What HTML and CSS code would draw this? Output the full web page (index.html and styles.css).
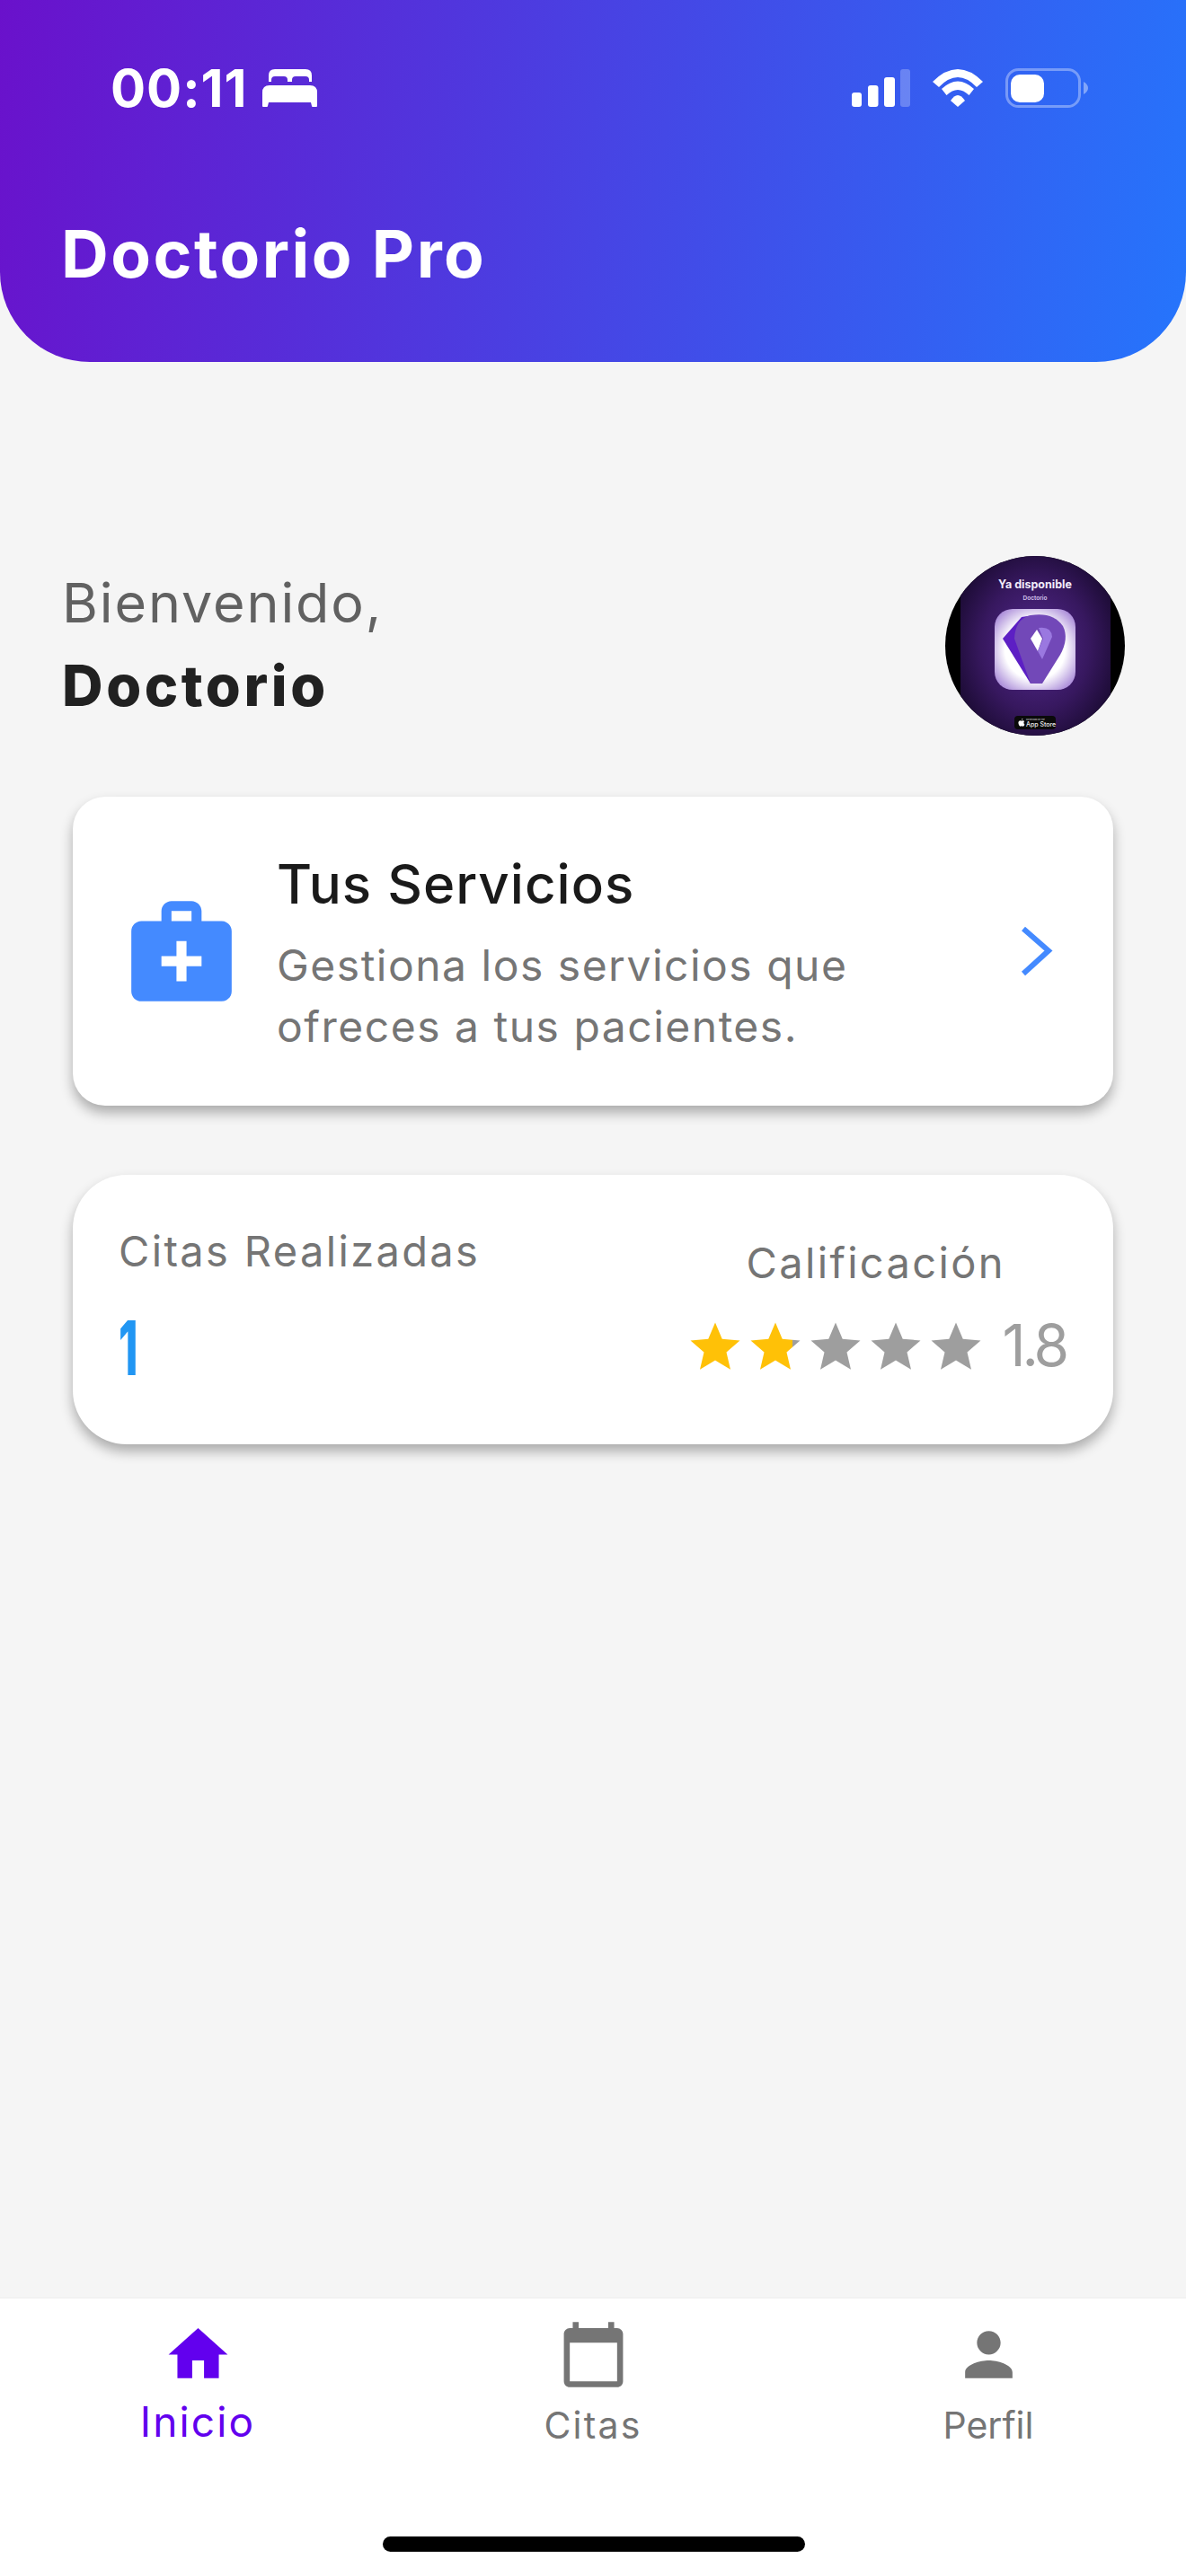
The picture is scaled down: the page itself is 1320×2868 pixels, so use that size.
FILE: index.html
```html
<!DOCTYPE html>
<html lang="es">
<head>
<meta charset="utf-8">
<title>Doctorio Pro</title>
<link rel="stylesheet" href="styles.css">
</head>
<body>
<div class="app">
  <header class="header">
    <div class="status">
      <div class="status-left">
        <span class="time">00:11</span>
        <svg class="bed" viewBox="0 0 61 42" width="61" height="42"><path fill="#fff" fill-rule="evenodd" d="M14 0H48Q55 0 55 7V14H52V12Q52 8 48 8H37Q33 8 33 12V14H28V12Q28 8 24 8H14Q10 8 10 12V14H7V7Q7 0 14 0ZM8 18H53Q61 18 61 26V41Q61 42 60 42H56Q55 42 55 41L54 37H7L6 41Q6 42 5 42H1Q0 42 0 41V26Q0 18 8 18Z"/></svg>
      </div>
      <div class="status-right">
        <svg viewBox="0 0 65 42" width="65" height="42"><rect x="0" y="26" width="11" height="16" rx="3" fill="#fff"/><rect x="18" y="18" width="11.5" height="24" rx="3" fill="#fff"/><rect x="36" y="9" width="12" height="33" rx="3" fill="#fff"/><rect x="54" y="0" width="11" height="42" rx="3" fill="#fff" fill-opacity=".25"/></svg>
        <svg viewBox="0 0 56 42" width="56" height="42"><path fill="#fff" d="M0 14Q28-14 56 14L49 20Q28-2 7 20Z"/><path fill="#fff" d="M10 22Q28 5 46 22L40.5 29Q28 17 15.5 29Z"/><path fill="#fff" d="M20 35Q28 23 36 35L28 42Z"/></svg>
        <svg class="battery" viewBox="0 0 92 44" width="92" height="44"><rect x="1.5" y="1.5" width="81" height="41" rx="13" fill="none" stroke="#fff" stroke-opacity=".35" stroke-width="3"/><rect x="6" y="7" width="37" height="31" rx="10" fill="#fff"/><path d="M87 15Q92 18 92 22Q92 26 87 29Z" fill="#fff" fill-opacity=".4"/></svg>
      </div>
    </div>
    <h1 class="brand">Doctorio Pro</h1>
  </header>

  <main class="main">
    <section class="greeting">
      <div class="greeting-text">
        <p class="hello">Bienvenido,</p>
        <p class="name">Doctorio</p>
      </div>
      <svg class="avatar" viewBox="0 0 200 200" width="200" height="200">
        <defs>
          <clipPath id="round"><circle cx="100" cy="100" r="100"/></clipPath>
          <radialGradient id="glow" cx="50%" cy="50%" r="60%"><stop offset="0" stop-color="#54298f"/><stop offset=".6" stop-color="#37185f"/><stop offset="1" stop-color="#190a30"/></radialGradient>
          <radialGradient id="tile" cx="50%" cy="50%" r="62%"><stop offset="0" stop-color="#fff"/><stop offset=".6" stop-color="#fff"/><stop offset="1" stop-color="#a98ad8"/></radialGradient>
        </defs>
        <g clip-path="url(#round)">
          <rect width="200" height="200" fill="#000"/>
          <rect x="17" width="167" height="200" fill="url(#glow)"/>
          <rect x="55" y="59" width="90" height="90" rx="20" fill="url(#tile)"/>
          <path fill="#5d1fc4" d="M64 92L85 68L98 66L99 142H95Z"/>
          <path fill="#7248b8" d="M95 66Q120 62 131 78Q138 92 128 110L108 142H95L77 92Q78 70 95 66Z"/>
          <path fill="#fff" d="M95 92L102 82L108 92L103 106Z"/>
          <path fill="#9a78e0" d="M104 80Q118 78 119 90L108 115L103 106L109 92Z"/>
          <text class="av-title" x="100" y="36" text-anchor="middle">Ya disponible</text>
          <text class="av-sub" x="100" y="49" text-anchor="middle">Doctorio</text>
          <rect x="77" y="178" width="46" height="15" rx="4" fill="#0a0a0a"/>
          <path fill="#fff" d="M85 182.5c1-.2 1.4-.9 1.4-1.5-.9.1-1.6.7-1.4 1.5zm2.4 3.2c0-1 .6-1.4.9-1.6-.6-.8-1.3-.9-1.7-.9-.7 0-1 .4-1.6.4-.6 0-1-.4-1.6-.4-1 0-2 1-2 2.6 0 1.8 1.3 3.9 2.3 3.9.6 0 .8-.4 1.4-.4.6 0 .8.4 1.4.4.9 0 1.7-1.6 1.9-2.3-.5-.2-1-.9-1-1.7z"/>
          <text class="av-small" x="90" y="183">Download on the</text>
          <text class="av-store" x="90" y="190">App Store</text>
        </g>
      </svg>
    </section>

    <section class="card services">
      <svg class="services-icon" viewBox="0 0 24 24" width="134" height="134"><path fill="#448aff" d="M20 6h-4V4c0-1.1-.9-2-2-2h-4c-1.1 0-2 .9-2 2v2H4c-1.1 0-2 .9-2 2v12c0 1.1.9 2 2 2h16c1.1 0 2-.9 2-2V8c0-1.1-.9-2-2-2zM10 4h4v2h-4V4zm6 11h-3v3h-2v-3H8v-2h3v-3h2v3h3v2z"/></svg>
      <div class="services-text">
        <h2 class="services-title">Tus Servicios</h2>
        <p class="services-desc">Gestiona los servicios que<br>ofreces a tus pacientes.</p>
      </div>
      <svg class="chevron" viewBox="0 0 40 60" width="40" height="60"><path d="M6 5L34 29.5L6 55" fill="none" stroke="#448aff" stroke-width="6" stroke-linejoin="miter"/></svg>
    </section>

    <section class="card stats">
      <div class="stat-left">
        <p class="stat-label">Citas Realizadas</p>
        <p class="stat-value">1</p>
      </div>
      <div class="stat-right">
        <p class="stat-label">Calificación</p>
        <div class="rating">
          <svg class="stars" viewBox="0 0 335 66" width="335" height="66">
            <defs>
              <path id="star" d="M12 17.27L18.18 21l-1.64-7.03L22 9.24l-7.19-.61L12 2 9.19 8.63 2 9.24l5.46 4.73L5.82 21z" transform="scale(2.75)"/>
              <linearGradient id="part" gradientUnits="userSpaceOnUse" x1="0" x2="24" y1="0" y2="0"><stop offset=".79" stop-color="#ffc107"/><stop offset=".79" stop-color="#9e9e9e"/></linearGradient>
            </defs>
            <use href="#star" fill="#ffc107"/>
            <use href="#star" x="67" fill="url(#part)"/>
            <use href="#star" x="134" fill="#9e9e9e"/>
            <use href="#star" x="201" fill="#9e9e9e"/>
            <use href="#star" x="268" fill="#9e9e9e"/>
          </svg>
          <span class="score">1.8</span>
        </div>
      </div>
    </section>
  </main>

  <nav class="nav">
    <div class="tabs">
      <div class="tab">
        <svg viewBox="0 0 24 24" width="79" height="79"><path fill="#6200ee" d="M10 20v-6h4v6h5v-8h3L12 3 2 12h3v8z"/></svg>
        <span class="tab-label active">Inicio</span>
      </div>
      <div class="tab">
        <svg viewBox="0 0 24 24" width="79" height="79"><path fill="#757575" d="M20 3h-1V1h-2v2H7V1H5v2H4c-1.1 0-2 .9-2 2v16c0 1.1.9 2 2 2h16c1.1 0 2-.9 2-2V5c0-1.1-.9-2-2-2zm0 18H4V8h16v13z"/></svg>
        <span class="tab-label wide">Citas</span>
      </div>
      <div class="tab">
        <svg viewBox="0 0 24 24" width="79" height="79"><path fill="#757575" d="M12 12c2.21 0 4-1.79 4-4s-1.79-4-4-4-4 1.79-4 4 1.79 4 4 4zm0 2c-2.67 0-8 1.34-8 4v2h16v-2c0-2.66-5.33-4-8-4z"/></svg>
        <span class="tab-label tight">Perfil</span>
      </div>
    </div>
    <div class="home-indicator"></div>
  </nav>
</div>
</body>
</html>
```
FILE: styles.css
```css
* { box-sizing: border-box; }
html, body { margin: 0; padding: 0; }
body { font-family: Inter, "Liberation Sans", sans-serif; background: #f5f5f5; }
p, h1, h2 { margin: 0; font-weight: 400; }
svg { display: block; flex: none; }

.app { width: 1320px; height: 2868px; display: flex; flex-direction: column; background: #f5f5f5; overflow: hidden; }

.header {
  height: 403px;
  padding-top: 77px;
  background: linear-gradient(100deg, #6a11cb 0%, #2575fc 100%);
  border-radius: 0 0 100px 100px;
  flex: none;
}
.status { display: flex; justify-content: space-between; height: 42px; padding: 0 109px 0 123px; }
.status-left { display: flex; align-items: center; gap: 16px; }
.status-right { display: flex; align-items: center; gap: 25px; }
.battery { margin: -1px 0; }
.time { font-size: 58px; line-height: 42px; font-weight: 700; color: #fff; letter-spacing: 1px; }
.brand { margin: 124px 0 0 68px; font-size: 73px; line-height: 80px; font-weight: 700; color: #fff; letter-spacing: 2.5px; }

.main { flex: 1; }
.greeting { display: flex; justify-content: space-between; margin-top: 216px; padding: 0 68px 0 69px; }
.greeting-text { padding-top: 12px; }
.hello { font-size: 61px; line-height: 80px; color: #616161; letter-spacing: 1.9px; }
.name { margin-top: 12px; font-size: 63px; line-height: 80px; font-weight: 800; color: #212121; letter-spacing: 3.6px; }

.av-title { font: 700 12.5px Inter, sans-serif; fill: #f2ecfa; }
.av-sub { font: 600 6.5px Inter, sans-serif; fill: #d8c8f0; }
.av-small { font: 400 2.6px Inter, sans-serif; fill: #ddd; }
.av-store { font: 500 7px Inter, sans-serif; fill: #eee; }

.card { margin: 0 81px; background: #fff; box-shadow: 0 8px 14px rgba(0, 0, 0, .3); }
.services { display: flex; align-items: center; height: 344px; margin-top: 68px; padding-left: 54px; border-radius: 36px; }
.services-text { flex: 1; margin: 3px 0 0 39px; }
.services-title { font-size: 60px; line-height: 80px; font-weight: 500; color: #1a1a1a; letter-spacing: 1px; }
.services-desc { margin-top: 17px; font-size: 48px; line-height: 68px; color: #757575; letter-spacing: 1.5px; }
.chevron { margin-right: 66px; }

.stats { display: flex; justify-content: space-between; height: 300px; margin-top: 77px; padding: 55px 53px 0 51px; border-radius: 60px; }
.stat-label { font-size: 47px; line-height: 60px; color: #757575; letter-spacing: 2.35px; }
.stat-value { width: 30px; margin-top: 28px; font-size: 84px; line-height: 100px; font-weight: 800; color: #2196f3; transform: scaleX(.58); transform-origin: left; }
.stat-right { display: flex; flex-direction: column; align-items: center; padding-top: 13px; }
.rating { display: flex; align-items: flex-start; gap: 17px; margin-top: 31px; }
.score { margin-top: -2px; font-size: 64px; line-height: 66px; font-weight: 400; color: #9e9e9e; letter-spacing: -4px; }

.nav { flex: none; height: 310px; display: flex; flex-direction: column; background: #fff; border-top: 1px solid #eee; }
.tabs { display: grid; grid-template-columns: repeat(3, 1fr); padding-top: 23px; }
.tab { display: flex; flex-direction: column; align-items: center; }
.tab-label { margin-top: 14px; font-size: 41px; line-height: 50px; color: #757575; }
.tab-label.wide { letter-spacing: 2.2px; }
.tab-label.tight { letter-spacing: 0; }
.tab-label.active { margin-top: 7px; font-size: 46px; line-height: 56px; color: #6200ee; letter-spacing: 2.1px; }
.home-indicator { width: 470px; height: 17px; margin: auto 0 27px 426px; border-radius: 9px; background: #000; }
```
